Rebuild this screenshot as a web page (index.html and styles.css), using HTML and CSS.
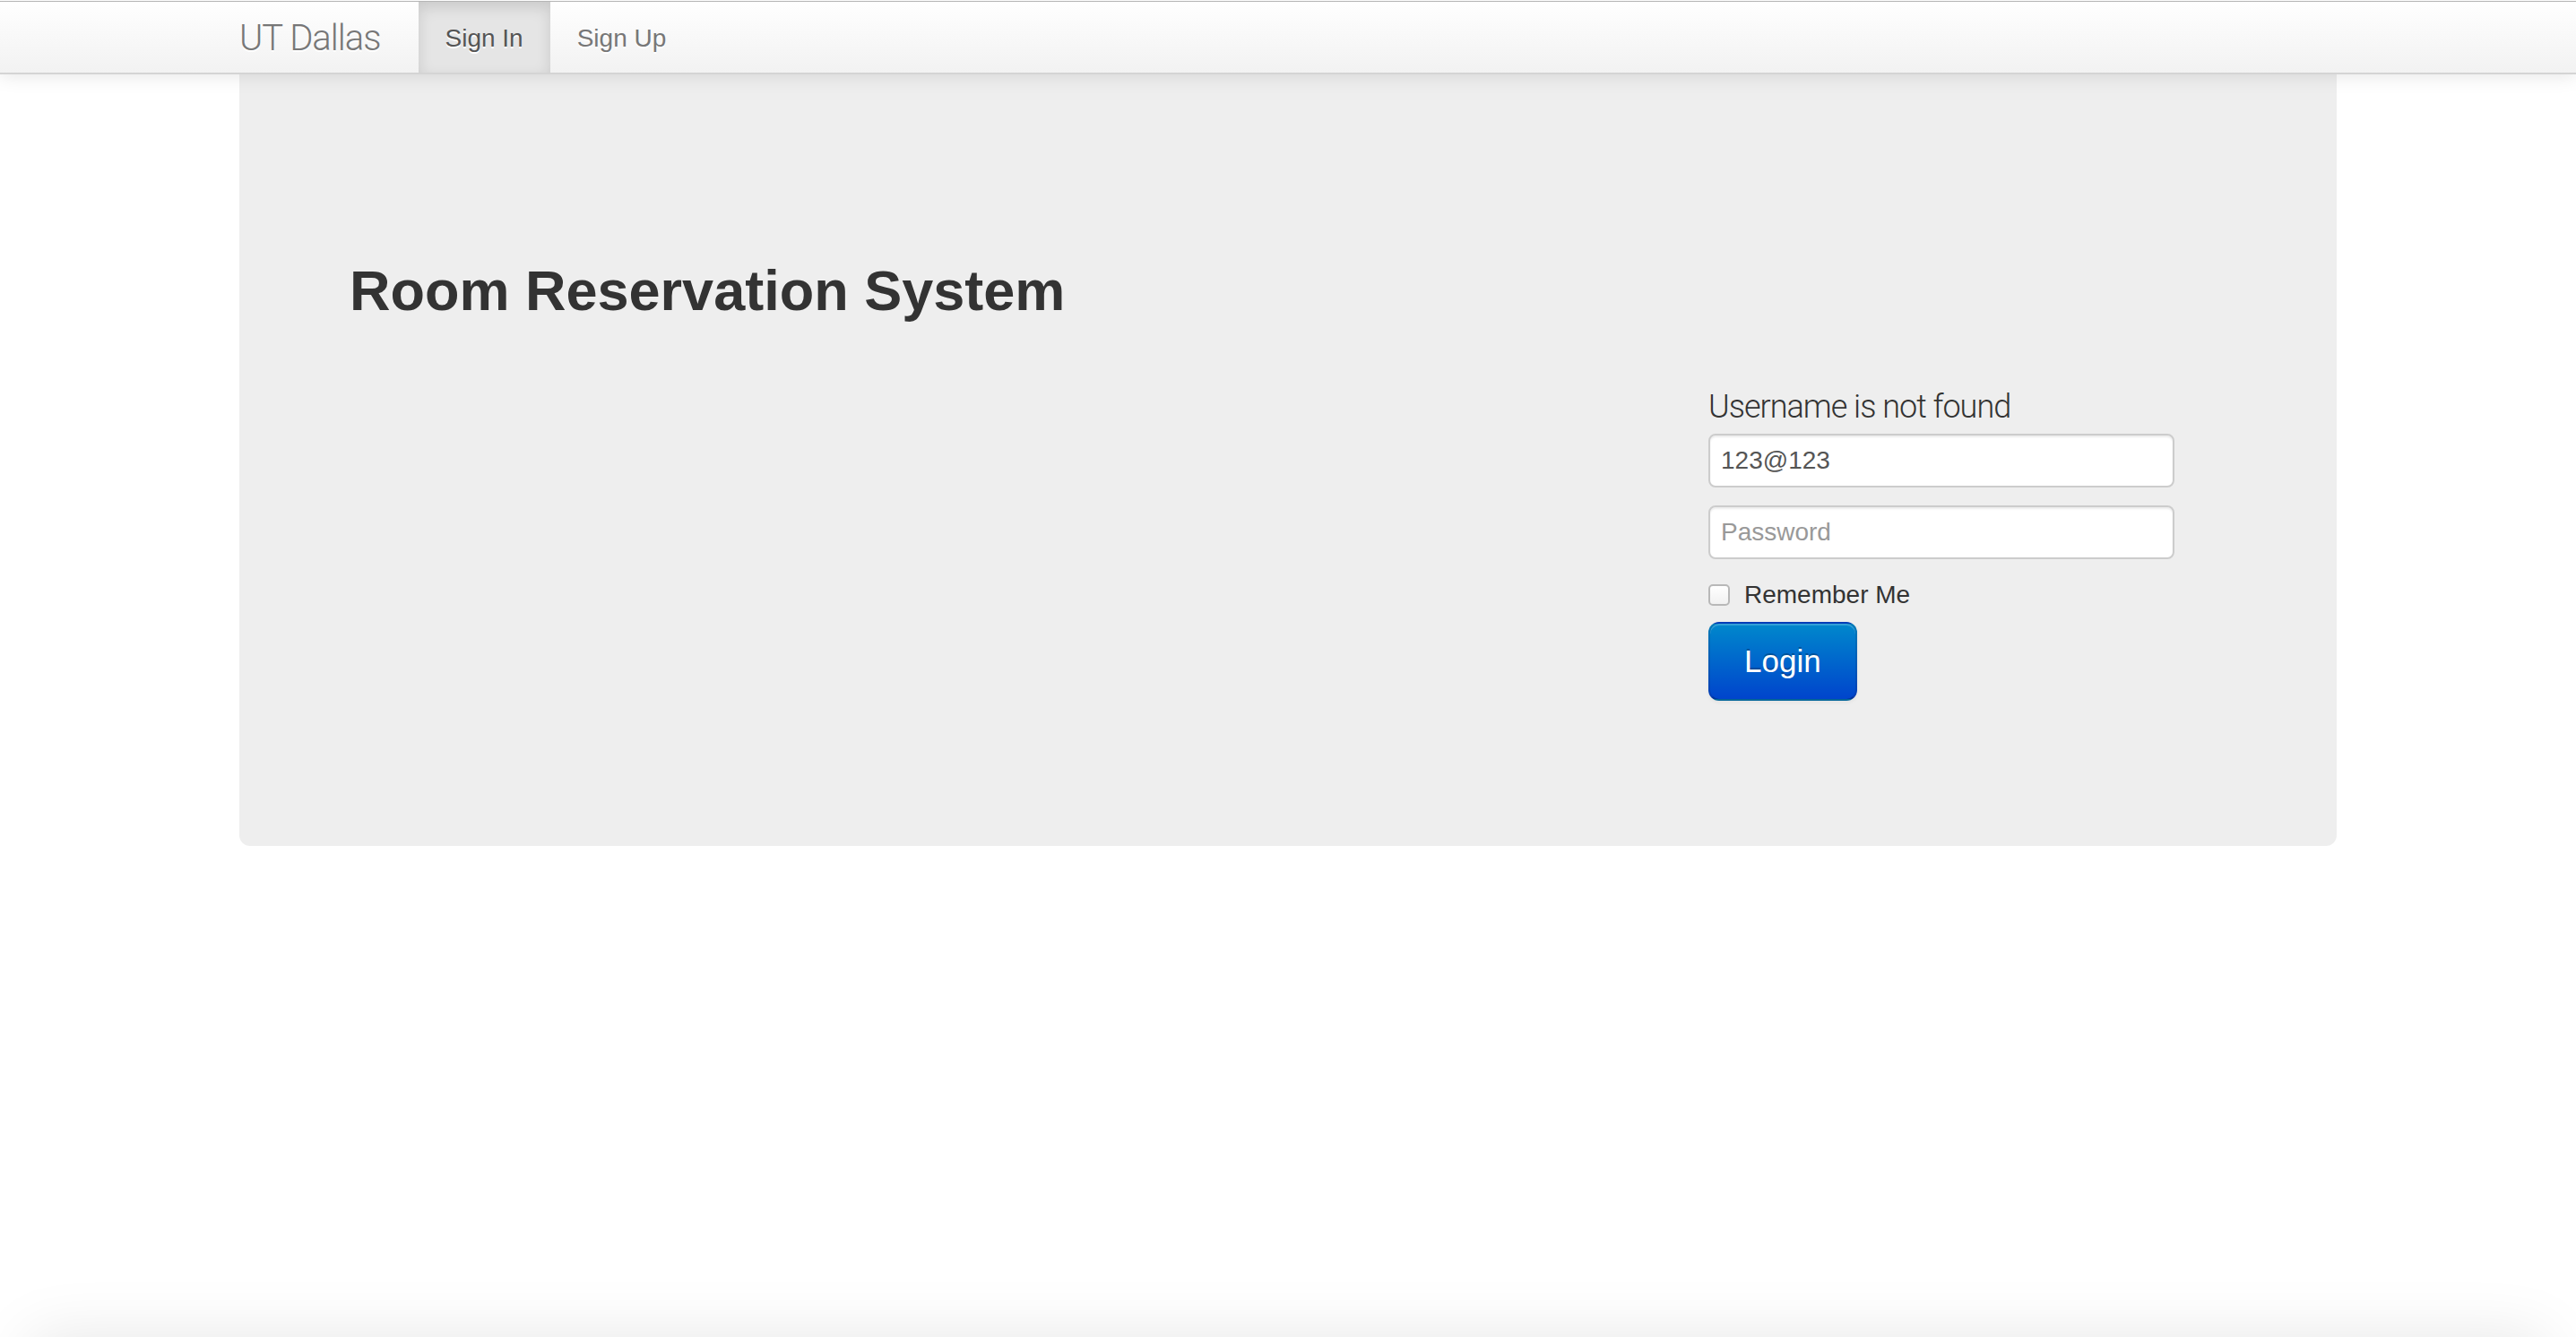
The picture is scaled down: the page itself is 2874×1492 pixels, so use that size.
FILE: index.html
```html
<!DOCTYPE html>
<html lang="en">
<head>
<meta charset="utf-8">
<title>Room Reservation System</title>
<link rel="stylesheet" href="styles.css">
</head>
<body>
<header class="navbar">
  <div class="container navbar-inner">
    <a class="brand" href="#">UT Dallas</a>
    <ul class="nav">
      <li class="active"><a href="#">Sign In</a></li>
      <li><a href="#">Sign Up</a></li>
    </ul>
  </div>
</header>
<main class="container">
  <section class="hero">
    <h2 class="hero-title">Room Reservation System</h2>
    <form class="login-form">
      <p class="form-message">Username is not found</p>
      <input class="field" type="text" value="123@123">
      <input class="field" type="password" placeholder="Password">
      <label class="checkbox"><input type="checkbox" class="check"><span>Remember Me</span></label>
      <button class="btn-login" type="button">Login</button>
    </form>
  </section>
</main>
<div class="bottom-shadow"></div>
</body>
</html>
```

FILE: styles.css
```css
* {
  box-sizing: border-box;
}

html,
body {
  margin: 0;
  padding: 0;
}

body {
  font-family: "Liberation Sans", Arial, Helvetica, sans-serif;
  font-size: 28px;
  line-height: 40px;
  color: #333;
  background: #fff;
  height: 1492px;
  overflow: hidden;
}

.container {
  width: 2340px;
  margin: 0 auto;
}

/* ---------- navbar ---------- */
.navbar {
  position: relative;
  z-index: 2;
  padding-top: 2px;
  border-bottom: 2px solid #d4d4d4;
  background:
    linear-gradient(to bottom, #fdfdfd 0, #fdfdfd 1px, #b5b5b5 1px, #b5b5b5 2px, transparent 2px),
    linear-gradient(to bottom, #ffffff, #f2f2f2);
  box-shadow: 0 2px 20px rgba(0, 0, 0, 0.1);
}

.navbar-inner {
  display: flex;
  align-items: stretch;
}

.brand {
  display: block;
  margin-left: -40px;
  padding: 21px 42px 18px 40px;
  font-family: Roboto, "Liberation Sans", sans-serif;
  font-weight: 300;
  font-size: 40px;
  line-height: 40px;
  letter-spacing: -1px;
  color: #777;
  text-decoration: none;
  text-shadow: 0 2px 0 #fff;
}

.nav {
  display: flex;
  margin: 0;
  padding: 0;
  list-style: none;
}

.nav a {
  display: block;
  padding: 21px 30px 18px;
  font-size: 28px;
  line-height: 40px;
  color: #777;
  text-decoration: none;
  text-shadow: 0 2px 0 #fff;
}

.nav .active a {
  color: #555;
  background-color: #e5e5e5;
  box-shadow: inset 0 6px 16px rgba(0, 0, 0, 0.125);
}

/* ---------- hero ---------- */
.hero {
  padding: 120px;
  background-color: #eeeeee;
  border-radius: 0 0 12px 12px;
}

.hero-title {
  margin: 81px 0 60px;
  padding-left: 3px;
  font-size: 63px;
  line-height: 80px;
  font-weight: bold;
  color: #333;
}

.login-form {
  width: 520px;
  margin: 0 0 42px 1519px;
}

.form-message {
  margin: 0;
  font-family: Roboto, "Liberation Sans", sans-serif;
  font-weight: 300;
  font-size: 36px;
  line-height: 60px;
  letter-spacing: -1px;
  color: #333;
}

.field {
  display: block;
  width: 520px;
  height: 60px;
  margin: 0 0 20px;
  padding: 8px 12px;
  font-family: "Liberation Sans", Arial, sans-serif;
  font-size: 28px;
  line-height: 40px;
  color: #555;
  background: #fff;
  border: 2px solid #cccccc;
  border-radius: 8px;
  box-shadow: inset 0 2px 2px rgba(0, 0, 0, 0.075);
  outline: none;
}

.field::placeholder {
  color: #999;
}

.checkbox {
  display: flex;
  align-items: center;
  height: 40px;
  margin-bottom: 10px;
  font-size: 28px;
  line-height: 40px;
  color: #333;
}

.check {
  appearance: none;
  -webkit-appearance: none;
  width: 24px;
  height: 24px;
  margin: 0 16px 0 0;
  border: 2px solid #b8b8b8;
  border-radius: 5px;
  background: linear-gradient(to bottom, #ffffff, #f1f1f1);
}

.btn-login {
  display: block;
  height: 88px;
  padding: 0 38px;
  font-family: "Liberation Sans", Arial, sans-serif;
  font-size: 35px;
  line-height: 40px;
  color: #fff;
  text-shadow: 0 -2px 0 rgba(0, 0, 0, 0.25);
  background: linear-gradient(to bottom, #0088cc, #0044cc);
  border: 2px solid;
  border-color: rgba(0, 0, 0, 0.1) rgba(0, 0, 0, 0.1) rgba(0, 0, 0, 0.25);
  border-radius: 12px;
  box-shadow: inset 0 2px 0 rgba(255, 255, 255, 0.2), 0 2px 4px rgba(0, 0, 0, 0.05);
  cursor: pointer;
}

/* decorative shadow of the footer just below the fold */
.bottom-shadow {
  position: fixed;
  left: 35px;
  right: 35px;
  bottom: -100px;
  height: 100px;
  box-shadow: 0 0 70px rgba(0, 0, 0, 0.1);
}
```
